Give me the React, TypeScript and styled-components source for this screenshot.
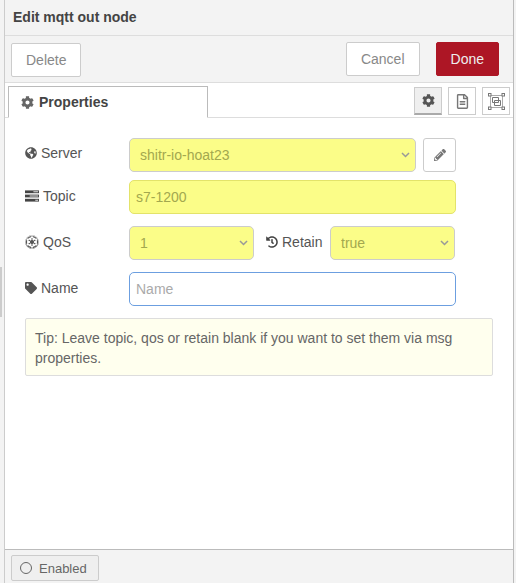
import styled, { createGlobalStyle } from "styled-components";
import {
  FaCog,
  FaEmpire,
  FaGlobeAmericas,
  FaHistory,
  FaPencilAlt,
  FaRegFileAlt,
  FaTag,
} from "react-icons/fa";

const chevron =
  "url(\"data:image/svg+xml,%3Csvg xmlns='http://www.w3.org/2000/svg' width='9' height='6' viewBox='0 0 9 6'%3E%3Cpath d='M1 1l3.5 3.5L8 1' fill='none' stroke='%23999' stroke-width='1.5'/%3E%3C/svg%3E\")";

const GlobalStyle = createGlobalStyle`
  html, body {
    margin: 0;
    padding: 0;
    background: #fff;
  }
  * {
    box-sizing: border-box;
  }
`;

const Page = styled.div`
  position: relative;
  width: 516px;
  height: 583px;
  overflow: hidden;
  display: flex;
  flex-direction: column;
  padding: 0 2px 0 4px;
  background: #f3f3f3;
  font-family: "Liberation Sans", Arial, sans-serif;
  font-size: 14px;
  color: #555;
`;

const ResizeHandle = styled.div`
  position: absolute;
  left: 0;
  top: 267px;
  width: 2px;
  height: 50px;
  background: #ccc;
`;

const Tray = styled.div`
  flex: 1;
  min-height: 0;
  display: flex;
  flex-direction: column;
  background: #fff;
  border-left: 1px solid #ccc;
  border-right: 1px solid #bbb;
`;

const Header = styled.div`
  height: 36px;
  padding: 9px 8px 0;
  background: #f3f3f3;
  border-bottom: 1px solid #ddd;
  font-weight: bold;
  color: #444;
  line-height: 16px;
`;

const Toolbar = styled.div`
  height: 47px;
  display: flex;
  align-items: flex-start;
  padding: 6px 14px 0 6px;
  background: #f3f3f3;
  border-bottom: 1px solid #ddd;
`;

const ActionButton = styled.button<{ $primary?: boolean; $left?: boolean }>`
  height: 34px;
  padding: 0 14px;
  margin-left: ${(p) => (p.$primary ? "16px" : "0")};
  margin-right: ${(p) => (p.$left ? "auto" : "0")};
  margin-top: ${(p) => (p.$left ? "1px" : "0")};
  border: 1px solid ${(p) => (p.$primary ? "#ad1625" : "#ccc")};
  border-radius: 2px;
  background: ${(p) => (p.$primary ? "#ad1625" : "#fff")};
  color: ${(p) => (p.$primary ? "#eee" : "#888")};
  font: 14px "Liberation Sans", Arial, sans-serif;
`;

const TabBar = styled.div`
  height: 35px;
  display: flex;
  align-items: flex-end;
  padding-left: 3px;
  border-bottom: 1px solid #ddd;
`;

const Tab = styled.div`
  width: 200px;
  height: 32px;
  margin-bottom: -1px;
  padding-left: 12px;
  display: flex;
  align-items: center;
  gap: 5px;
  background: #fff;
  border: 1px solid #bbb;
  border-bottom: 1px solid #fff;
  font-weight: bold;
  color: #444;
`;

const TabIcons = styled.div`
  margin-left: auto;
  display: flex;
  gap: 6px;
  align-self: flex-start;
  padding: 4px 3px 0 0;
`;

const IconTab = styled.div<{ $active?: boolean }>`
  width: 28px;
  height: 28px;
  display: flex;
  align-items: center;
  justify-content: center;
  border: 1px solid #ccc;
  border-bottom: ${(p) => (p.$active ? "2px solid #aaa" : "1px solid #ccc")};
  background: ${(p) => (p.$active ? "#efefef" : "#fff")};
  color: ${(p) => (p.$active ? "#555" : "#777")};
  font-size: ${(p) => (p.$active ? "13px" : "15px")};
`;

const Form = styled.div`
  flex: 1;
  padding: 20px 20px 0 20px;
`;

const Row = styled.div<{ $tight?: boolean }>`
  display: flex;
  align-items: flex-start;
  height: 34px;
  margin-bottom: ${(p) => (p.$tight ? "8px" : "12px")};
`;

const FieldLabel = styled.label<{ $high?: boolean }>`
  width: 104px;
  flex-shrink: 0;
  display: flex;
  align-items: center;
  gap: 4px;
  height: ${(p) => (p.$high ? "30px" : "32px")};
  font-size: 14px;
  color: #555;
`;

const InlineLabel = styled(FieldLabel)`
  width: 64px;
  margin-left: 12px;
`;

const Select = styled.select<{ $width: number }>`
  width: ${(p) => p.$width}px;
  height: 34px;
  padding: 0 6px 0 10px;
  appearance: none;
  border: 1px solid #ccc;
  border-radius: 5px;
  background: #fbfd88 ${chevron} no-repeat right 5px center;
  color: #a3a84f;
  font: 14px "Liberation Sans", Arial, sans-serif;
`;

const TextInput = styled.input<{ $filled?: boolean; $focused?: boolean }>`
  width: 327px;
  height: 34px;
  padding: 0 6px;
  border: 1px solid ${(p) => (p.$focused ? "#6c9fe0" : "#e3e36a")};
  border-radius: 5px;
  background: ${(p) => (p.$filled ? "#fbfd88" : "#fff")};
  color: #a3a84f;
  font: 14px "Liberation Sans", Arial, sans-serif;
  outline: none;

  &::placeholder {
    color: #aaa;
    opacity: 1;
  }
`;

const EditButton = styled.button`
  width: 33px;
  height: 34px;
  margin-left: 7px;
  padding: 0;
  display: flex;
  align-items: center;
  justify-content: center;
  border: 1px solid #ccc;
  border-radius: 3px;
  background: #fff;
  color: #777;
  font-size: 12px;
`;

const Tip = styled.div`
  width: 468px;
  height: 58px;
  padding: 9px 10px 0 9px;
  border: 1px solid #ddd;
  border-radius: 2px;
  background: #ffffee;
  font-size: 14px;
  line-height: 20px;
  color: #666;
`;

const Footer = styled.div`
  height: 34px;
  padding: 5px 0 0 6px;
  background: #f3f3f3;
  border-top: 1px solid #bbb;
`;

const EnabledButton = styled.button`
  width: 88px;
  height: 26px;
  padding: 0 0 0 8px;
  display: flex;
  align-items: center;
  gap: 7px;
  border: 1px solid #ccc;
  border-radius: 2px;
  background: #efefef;
  color: #666;
  font: 13px "Liberation Sans", Arial, sans-serif;
`;

const Radio = styled.span`
  width: 12px;
  height: 12px;
  border: 1.5px solid #666;
  border-radius: 50%;
`;

function TasksIcon() {
  return (
    <svg width="14" height="12" viewBox="0 0 15 12" fill="#444">
      <path d="M0 0h15v3H0z" />
      <path d="M0 4.5h15v3H0z" />
      <path d="M0 9h15v3H0z" />
      <path d="M9 1h5v1H9zM5 5.5h9v1H5zM11 10h3v1h-3z" fill="#ddd" />
    </svg>
  );
}

function FrameIcon() {
  return (
    <svg width="17" height="17" viewBox="0 0 17 17" fill="none">
      <path d="M2.5 2.5h12v12h-12z" stroke="#aaa" />
      <path d="M4.5 4.5h6v5h-6z" stroke="#777" />
      <path d="M6.5 7.5h6v5h-6z" stroke="#777" />
      <g fill="#fff" stroke="#777">
        <rect x="0.5" y="0.5" width="2.5" height="2.5" />
        <rect x="14" y="0.5" width="2.5" height="2.5" />
        <rect x="0.5" y="14" width="2.5" height="2.5" />
        <rect x="14" y="14" width="2.5" height="2.5" />
      </g>
    </svg>
  );
}

export default function App() {
  return (
    <Page>
      <GlobalStyle />
      <ResizeHandle />
      <Tray>
        <Header>Edit mqtt out node</Header>
        <Toolbar>
          <ActionButton $left>Delete</ActionButton>
          <ActionButton>Cancel</ActionButton>
          <ActionButton $primary>Done</ActionButton>
        </Toolbar>
        <TabBar>
          <Tab>
            <FaCog size={13} color="#666" />
            Properties
          </Tab>
          <TabIcons>
            <IconTab $active>
              <FaCog />
            </IconTab>
            <IconTab>
              <FaRegFileAlt />
            </IconTab>
            <IconTab>
              <FrameIcon />
            </IconTab>
          </TabIcons>
        </TabBar>
        <Form>
          <Row $tight>
            <FieldLabel $high>
              <FaGlobeAmericas size={12} color="#555" />
              Server
            </FieldLabel>
            <Select $width={287} defaultValue="shitr">
              <option value="shitr">shitr-io-hoat23</option>
            </Select>
            <EditButton>
              <FaPencilAlt />
            </EditButton>
          </Row>
          <Row>
            <FieldLabel>
              <TasksIcon />
              Topic
            </FieldLabel>
            <TextInput $filled defaultValue="s7-1200" />
          </Row>
          <Row>
            <FieldLabel>
              <FaEmpire size={14} color="#555" />
              QoS
            </FieldLabel>
            <Select $width={125} defaultValue="1">
              <option value="1">1</option>
            </Select>
            <InlineLabel>
              <FaHistory size={12} color="#444" />
              Retain
            </InlineLabel>
            <Select $width={125} defaultValue="true">
              <option value="true">true</option>
            </Select>
          </Row>
          <Row>
            <FieldLabel>
              <FaTag size={12} color="#555" />
              Name
            </FieldLabel>
            <TextInput $focused placeholder="Name" />
          </Row>
          <Tip>Tip: Leave topic, qos or retain blank if you want to set them via msg properties.</Tip>
        </Form>
        <Footer>
          <EnabledButton>
            <Radio />
            Enabled
          </EnabledButton>
        </Footer>
      </Tray>
    </Page>
  );
}
